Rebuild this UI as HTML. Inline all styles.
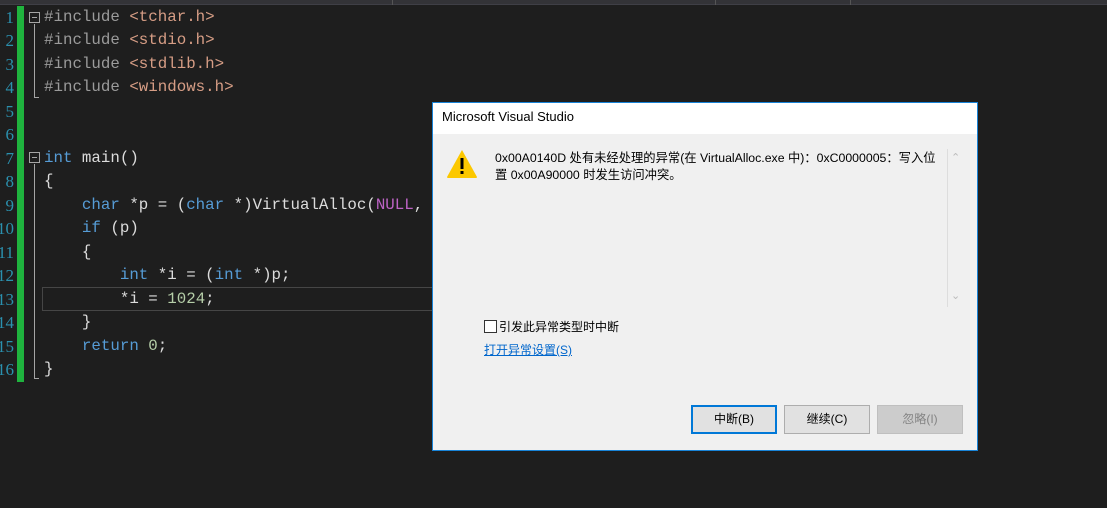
<!DOCTYPE html>
<html><head><meta charset="utf-8"><style>
*{margin:0;padding:0;box-sizing:border-box}
body{width:1107px;height:508px;background:#1e1e1e;position:relative;overflow:hidden;font-family:"Liberation Mono","Noto Sans CJK SC",monospace}
.top{position:absolute;left:0;top:0;width:1107px;height:5px;background:#333337;border-bottom:1px solid #3f3f46}
.sep{position:absolute;top:0;width:1px;height:5px;background:#555}
.ln{position:absolute;right:1093px;width:40px;text-align:right;color:#2b91af;font-size:17px;line-height:23.47px;font-family:"Liberation Serif",serif}
.code{position:absolute;left:44px;font-size:15.8px;line-height:23.47px;color:#dcdcdc;white-space:pre}
.k{color:#569cd6}.s{color:#d69d85}.p{color:#9b9b9b}.m{color:#bd63c5}.n{color:#b5cea8}
.green{position:absolute;left:17px;top:6px;width:7px;height:376px;background:#1fb33e}
.fold{position:absolute;left:29px;width:11px;height:11px;border:1px solid #a5a5a5;}
.fold:after{content:"";position:absolute;left:2px;top:4px;width:5px;height:1px;background:#a5a5a5}
.vl{position:absolute;left:34px;width:1px;background:#a5a5a5}
.hl{position:absolute;left:42px;top:287px;width:392px;height:24px;border:1px solid #464646;border-right:none;background:#1e1e1e}
.dlg{position:absolute;left:432px;top:102px;width:546px;height:349px;border:1px solid #1883d7;background:#f0f0f0;font-family:"Liberation Sans","Noto Sans CJK SC",sans-serif;font-size:12px;color:#000}
.title{height:31px;background:#fff;padding:6px 0 0 9px;font-size:13px}
.btn{position:absolute;top:302px;width:86px;height:29px;border:1px solid #adadad;background:#e1e1e1;text-align:center;line-height:26px;font-size:12px}
</style></head><body>
<div class="top"></div>
<div class="sep" style="left:392px"></div><div class="sep" style="left:715px"></div><div class="sep" style="left:850px"></div>
<div class="green"></div>
<div class="hl"></div>
<div class="ln" style="top:6px">1<br>2<br>3<br>4<br>5<br>6<br>7<br>8<br>9<br>10<br>11<br>12<br>13<br>14<br>15<br>16</div>
<div class="fold" style="top:12px"></div>
<div class="vl" style="top:24px;height:74px"></div><div class="vl" style="top:97px;height:1px;width:5px"></div>
<div class="fold" style="top:152px"></div>
<div class="vl" style="top:164px;height:215px"></div><div class="vl" style="top:378px;height:1px;width:5px"></div>
<div class="code" style="top:6px"><span class="p">#include</span> <span class="s">&lt;tchar.h&gt;</span>
<span class="p">#include</span> <span class="s">&lt;stdio.h&gt;</span>
<span class="p">#include</span> <span class="s">&lt;stdlib.h&gt;</span>
<span class="p">#include</span> <span class="s">&lt;windows.h&gt;</span>


<span class="k">int</span> main()
{
    <span class="k">char</span> *p = (<span class="k">char</span> *)VirtualAlloc(<span class="m">NULL</span>,
    <span class="k">if</span> (p)
    {
        <span class="k">int</span> *i = (<span class="k">int</span> *)p;
        *i = <span class="n">1024</span>;
    }
    <span class="k">return</span> <span class="n">0</span>;
}</div>
<div class="dlg">
<div class="title">Microsoft Visual Studio</div>
<svg style="position:absolute;left:13px;top:46px" width="32" height="30" viewBox="0 0 32 30"><path d="M16 1 L31 28 Q31 29 30 29 L2 29 Q1 29 1 28 Z" fill="#fcc800"/><rect x="14.5" y="9" width="3" height="11" fill="#000"/><rect x="14.5" y="22" width="3" height="3" fill="#000"/></svg>
<div style="position:absolute;left:62px;top:47px;line-height:17px;width:446px;font-size:12.3px">0x00A0140D 处有未经处理的异常(在 VirtualAlloc.exe 中)：0xC0000005：写入位置 0x00A90000 时发生访问冲突。</div>
<div style="position:absolute;left:514px;top:46px;width:1px;height:158px;background:#ddd"></div>
<div style="position:absolute;left:518px;top:48px;color:#bbb;font-size:11px">&#8963;</div>
<div style="position:absolute;left:518px;top:186px;color:#bbb;font-size:11px">&#8964;</div>
<div style="position:absolute;left:51px;top:217px;width:13px;height:13px;border:1px solid #333;background:#fff"></div>
<div style="position:absolute;left:66px;top:215px">引发此异常类型时中断</div>
<div style="position:absolute;left:51px;top:238px;color:#0066cc;text-decoration:underline">打开异常设置(S)</div>
<div class="btn" style="left:258px;border:2px solid #0078d7;line-height:25px">中断(B)</div>
<div class="btn" style="left:351px">继续(C)</div>
<div class="btn" style="left:444px;background:#cccccc;border-color:#bfbfbf;color:#838383">忽略(I)</div>
</div>
</body></html>
